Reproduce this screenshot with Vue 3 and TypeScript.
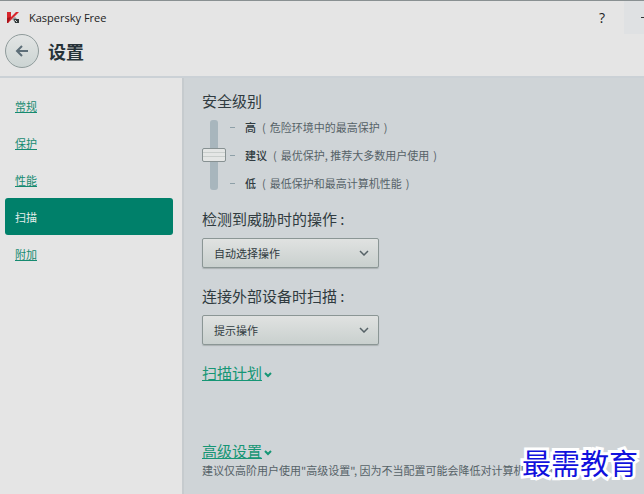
<script setup lang="ts">
import { ref } from 'vue'

interface NavItem {
  id: string
  label: string
}

const navItems: NavItem[] = [
  { id: 'general', label: '常规' },
  { id: 'protection', label: '保护' },
  { id: 'performance', label: '性能' },
  { id: 'scan', label: '扫描' },
  { id: 'additional', label: '附加' },
]
const current = ref('scan')

const levels = [
  { name: '高', note: '危险环境中的最高保护' },
  { name: '建议', note: '最优保护, 推荐大多数用户使用' },
  { name: '低', note: '最低保护和最高计算机性能' },
]
const level = ref(2)
const threatAction = ref('auto')
const deviceAction = ref('prompt')
</script>

<template>
  <div class="window">
    <header class="header">
      <div class="titlebar">
        <svg class="logo" viewBox="0 0 13 13" aria-hidden="true">
          <path d="M0 1h4v5l5-5h3L7 6l-6 6H0z" fill="#d8262c" />
          <path d="M0 7l4-1-3 6H0z" fill="#a8141a" />
          <path d="M5 8l3-2 2 2-2 3z" fill="#8d9293" />
          <path d="M7 8h5v4H8z" fill="#33393a" />
          <path d="M8 9l2 2" stroke="#d5d8d8" />
        </svg>
        <span class="app-name">Kaspersky Free</span>
        <button class="help" type="button" aria-label="?">?</button>
        <button class="minimize" type="button" aria-label="–"><span></span></button>
      </div>
      <div class="heading">
        <button class="back" type="button" aria-label="←">
          <svg viewBox="0 0 14 12" aria-hidden="true">
            <path d="M13 6H2M7 1L2 6l5 5" fill="none" stroke="#5d6e78" stroke-width="2" />
          </svg>
        </button>
        <h1>设置</h1>
      </div>
    </header>

    <div class="body">
      <nav class="sidebar">
        <a
          v-for="item in navItems"
          :key="item.id"
          :href="'#' + item.id"
          :class="{ active: item.id === current }"
          @click.prevent="current = item.id"
        ><span>{{ item.label }}</span></a>
      </nav>

      <main class="content">
        <label class="title" for="level">安全级别</label>
        <div class="level">
          <input id="level" v-model.number="level" class="slider" type="range" min="1" max="3" step="1" />
          <ul>
            <li v-for="item in levels" :key="item.name">
              <i></i><b>{{ item.name }}</b>
              <span class="note"><span>(</span><span>{{ item.note }}</span><span>)</span></span>
            </li>
          </ul>
        </div>

        <label class="title" for="threat">检测到威胁时的操作 :</label>
        <div class="dropdown">
          <select id="threat" v-model="threatAction">
            <option value="auto">自动选择操作</option>
            <option value="prompt">提示操作</option>
          </select>
          <svg viewBox="0 0 10 6" aria-hidden="true"><path d="M1 1l4 4 4-4" /></svg>
        </div>

        <label class="title" for="device">连接外部设备时扫描 :</label>
        <div class="dropdown">
          <select id="device" v-model="deviceAction">
            <option value="prompt">提示操作</option>
            <option value="none">不扫描</option>
          </select>
          <svg viewBox="0 0 10 6" aria-hidden="true"><path d="M1 1l4 4 4-4" /></svg>
        </div>

        <a class="section" href="#schedule">
          <span>扫描计划</span>
          <svg viewBox="0 0 8 6" aria-hidden="true"><path d="M1 1l3 3 3-3" /></svg>
        </a>
        <a class="section advanced" href="#advanced">
          <span>高级设置</span>
          <svg viewBox="0 0 8 6" aria-hidden="true"><path d="M1 1l3 3 3-3" /></svg>
        </a>
        <p class="hint">建议仅高阶用户使用"高级设置", 因为不当配置可能会降低对计算机的保护级别</p>
      </main>
    </div>

    <div class="watermark">最需教育</div>
  </div>
</template>

<style>
body {
  background: #cfd4d7;
}
</style>

<style scoped>
.window {
  position: relative;
  display: flex;
  flex-direction: column;
  min-height: 100vh;
  overflow: hidden;
  box-sizing: border-box;
  border-top: 1px solid #899092;
  background: #e5e5e5;
  color: #303b40;
  font: 11px/16px "Noto Sans CJK SC", sans-serif;
}
button {
  padding: 0;
  border: 0;
  background: none;
  color: inherit;
  font: inherit;
}
.header {
  height: 75px;
  border-bottom: 2px solid #cbd1d6;
}
.titlebar {
  display: flex;
  align-items: center;
  height: 33px;
  padding-left: 7px;
}
.logo {
  width: 13px;
  height: 13px;
  margin-right: 9px;
}
.app-name {
  flex: 1;
  color: #222;
  font: 11px/16px "Open Sans", sans-serif;
}
.help {
  width: 24px;
  margin-right: 10px;
  color: #222;
  font: 14px/20px "Open Sans", sans-serif;
}
.minimize {
  display: flex;
  align-items: center;
  justify-content: flex-end;
  width: 20px;
  height: 33px;
  background: #dfe1e3;
}
.minimize span {
  width: 3px;
  height: 1px;
  background: #333;
}
.heading {
  display: flex;
  align-items: center;
  gap: 9px;
  padding-left: 5px;
}
.back {
  display: flex;
  align-items: center;
  justify-content: center;
  width: 34px;
  height: 34px;
  border: 1px solid #8f9b9b;
  border-radius: 50%;
  background: linear-gradient(#e2e4e4, #ccd4d3);
}
.back svg {
  width: 14px;
  height: 12px;
}
h1 {
  margin: 0;
  color: #263238;
  font-size: 18px;
  line-height: 24px;
}
.body {
  display: flex;
  flex: 1;
}
.sidebar {
  display: flex;
  flex-direction: column;
  flex: none;
  box-sizing: border-box;
  width: 184px;
  padding: 9px 9px 0 5px;
  border-right: 2px solid #c6cbce;
}
.sidebar a {
  display: flex;
  align-items: center;
  height: 37px;
  padding-left: 10px;
  border-radius: 3px;
  color: #168a70;
  line-height: 14px;
  text-decoration: none;
}
.sidebar a.active {
  background: #00806a;
  color: #e5eeea;
}
.content {
  display: flex;
  flex: 1;
  flex-direction: column;
  align-items: flex-start;
  min-width: 0;
  padding: 12px 0 8px 18px;
  background: #cfd4d7;
}
.title {
  font-size: 15px;
  line-height: 22px;
}
.level {
  display: flex;
  align-items: center;
  gap: 4px;
  margin: 1px 0 11px;
}
.slider {
  appearance: none;
  writing-mode: vertical-lr;
  width: 24px;
  height: 70px;
  margin: 0;
  background: none;
}
.slider::-webkit-slider-runnable-track {
  width: 8px;
  height: 70px;
  border-radius: 3px;
  background: #a8b6bd;
}
.slider::-webkit-slider-thumb {
  appearance: none;
  box-sizing: border-box;
  width: 24px;
  height: 14px;
  margin-left: -8px;
  border: 1px solid #879192;
  border-radius: 2px;
  background: linear-gradient(#e4e6e5 0 3px, #c9cecc 3px 4px, #e4e6e5 4px 7px, #c9cecc 7px 8px, #e4e6e5 8px);
}
.level ul {
  margin: 0;
  padding: 0;
  list-style: none;
}
.level li {
  display: flex;
  align-items: center;
  height: 28px;
}
.level i {
  width: 5px;
  height: 1px;
  margin-right: 10px;
  background: #8ea0a8;
}
.level b {
  margin-right: 6px;
  font-weight: 500;
}
.note {
  display: flex;
  gap: 4px;
}
.note,
.hint {
  color: #566267;
}
.dropdown {
  position: relative;
  margin: 8px 0 17px;
}
.dropdown select {
  appearance: none;
  display: block;
  box-sizing: border-box;
  width: 177px;
  height: 30px;
  padding: 0 28px 0 11px;
  border: 1px solid #8b9695;
  border-radius: 2px;
  background: linear-gradient(#e0e2e1, #c9d0ce);
  box-shadow: 0 1px 1px #aab1b2;
  color: #303b40;
  font: inherit;
}
.dropdown svg {
  position: absolute;
  right: 10px;
  top: 12px;
  width: 10px;
  height: 6px;
  pointer-events: none;
}
.dropdown path {
  fill: none;
  stroke: #566267;
  stroke-width: 1.5;
}
.section {
  display: flex;
  align-items: center;
  gap: 2px;
  color: #169675;
  font-size: 15px;
  line-height: 22px;
  text-decoration: none;
}
.section span,
.sidebar a:not(.active) span {
  text-decoration: underline;
  text-underline-offset: 1px;
}
.section svg {
  width: 8px;
  height: 6px;
  margin-top: 4px;
}
.section path {
  fill: none;
  stroke: #169675;
  stroke-width: 2;
}
.advanced {
  margin-top: 56px;
}
.hint {
  margin: 0;
  white-space: nowrap;
}
.watermark {
  position: absolute;
  right: 6px;
  bottom: 11px;
  color: #1111dd;
  font: 29px/42px "AR PL UKai CN", KaiTi, "Noto Sans CJK SC", serif;
  -webkit-text-stroke: 6px #fff;
  paint-order: stroke fill;
}
</style>
